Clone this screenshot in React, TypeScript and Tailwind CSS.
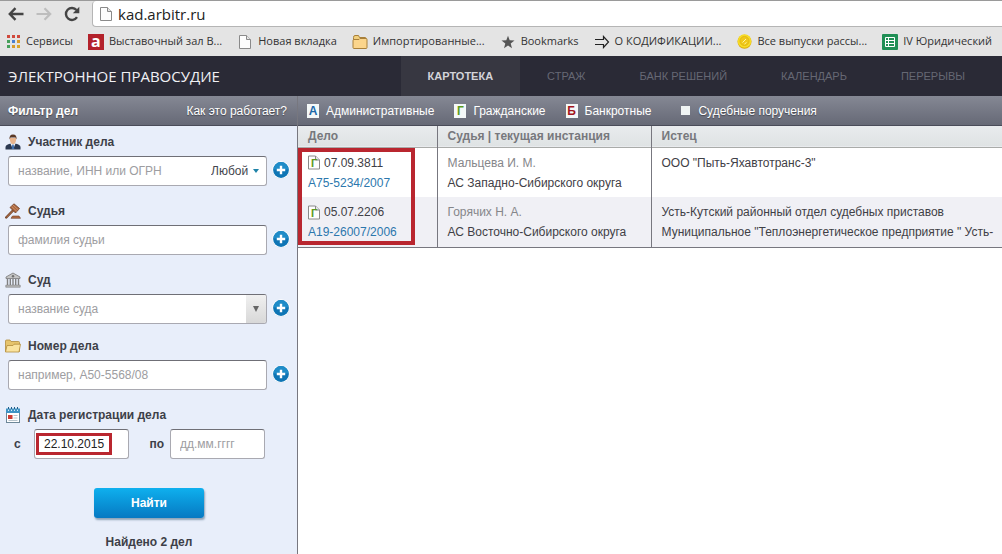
import type { ReactElement, ReactNode } from 'react';

const UI_FONT = "font-['Liberation_Sans',Arial,sans-serif]";
const CHROME_FONT = "font-['Open_Sans','Noto_Sans',sans-serif]";

/* ---------- icons ---------- */

function PageIcon({ className }: { className?: string }): ReactElement {
  return (
    <svg viewBox="0 0 12 14" className={className} fill="#fdfdfd" stroke="#8a8a8a">
      <path d="M.5.5h7l4 4v9H.5z" />
      <path d="M7.5.5v4h4" fill="#e6e6e6" />
    </svg>
  );
}

function AppsIcon(): ReactElement {
  const colors = ['#d0493c', '#d0493c', '#d0493c', '#46a05a', '#4a7fd0', '#d99a2b', '#46a05a', '#d99a2b', '#d9a52b'];
  return (
    <svg viewBox="0 0 13 13" className="size-[13px]">
      {colors.map((c, i) => (
        <rect key={i} x={(i % 3) * 5} y={Math.floor(i / 3) * 5} width="3" height="3" fill={c} />
      ))}
    </svg>
  );
}

function FolderIcon(): ReactElement {
  return (
    <svg viewBox="0 0 16 14" className="h-[14px] w-4" stroke="#a9803a">
      <path d="M1.5 12V2.500Q1.500.5 3 .5h3.500l1 2H13q1 0 1 1V12z" fill="#f1cf7c" />
      <path d="M1 12.500q0 1 1 1h12q1 0 1-1v-8q0-1-1-1H8l-1 1H2q-1 0-1 1z" fill="#fbd58c" />
    </svg>
  );
}

function StarIcon(): ReactElement {
  return (
    <svg viewBox="0 0 14 14" className="size-[14px]" fill="#555">
      <path d="M7 .8l1.700 4.500 4.800.2-3.800 3 1.300 4.700L7 10.500 3 13.200l1.300-4.700-3.800-3 4.800-.2z" />
    </svg>
  );
}

function DoubleArrowIcon(): ReactElement {
  return (
    <svg viewBox="0 0 16 14" className="h-[14px] w-4" fill="none" stroke="#222" strokeWidth="1.200">
      <path d="M1 4.500h8.500V1.500L14.500 7l-5 5.500v-3H1" />
    </svg>
  );
}

function CoinIcon(): ReactElement {
  return (
    <svg viewBox="0 0 15 15" className="size-[15px]">
      <circle cx="7.500" cy="7.800" r="7" fill="#d9a80c" />
      <circle cx="7.500" cy="7" r="6.800" fill="#f7dc25" />
      <circle cx="7.500" cy="7" r="4.500" fill="#f0c81a" stroke="#e3b814" />
      <path d="M5.500 8.500L9 5M9.500 8.500L7.500 10" stroke="#fff6a8" />
    </svg>
  );
}

function SheetIcon(): ReactElement {
  return (
    <svg viewBox="0 0 16 16" className="size-4">
      <rect width="16" height="16" rx="1" fill="#1f8f55" />
      <path d="M3.500 3.500h9v9h-9zM3.500 6.500h9M3.500 9.500h9M6.500 3.500v9" fill="none" stroke="#fff" />
    </svg>
  );
}

function PersonIcon(): ReactElement {
  return (
    <svg viewBox="0 0 16 16" className="size-4">
      <path d="M.5 15.500v-2.500Q1 10.500 5 9.800h6q4 .7 4.500 3.200v2.500z" fill="#2b3850" />
      <path d="M5.500 9.500L8 15.500l2.500-6z" fill="#f4f6fa" />
      <path d="M7.300 10.500h1.400l.6 4.500H6.700z" fill="#3f6fb0" />
      <path d="M4.800 4Q5 10.200 8 10.200T11.200 4z" fill="#e9b58d" />
      <path d="M4.500 5.500Q4 .5 8 .5t3.500 5L10.500 3.500h-5z" fill="#5a3826" />
    </svg>
  );
}

function GavelIcon(): ReactElement {
  return (
    <svg viewBox="0 0 16 16" className="size-4">
      <path d="M1.200 14.500L8 7.500" stroke="#6e3d23" strokeWidth="2.400" strokeLinecap="round" />
      <path d="M1.500 14.200L8 7.500" stroke="#c08055" strokeLinecap="round" />
      <path d="M5 4.500L9 .8l5.500 4.700-4 4.500z" fill="#a8653f" stroke="#6e3d23" strokeWidth=".8" />
      <path d="M6.500 3.300l5.500 5.200M8 2l5.500 5" stroke="#d99c70" strokeWidth=".8" />
      <path d="M7.500 13h6.500l1.500 2.300H6z" fill="#b06a42" stroke="#6e3d23" strokeWidth=".6" />
    </svg>
  );
}

function CourtIcon(): ReactElement {
  return (
    <svg viewBox="0 0 16 16" className="size-4">
      <path d="M8 1l7 4v1.500H1V5z" fill="#c4c4c4" stroke="#777" strokeWidth=".8" />
      <circle cx="8" cy="4.200" r="1.200" fill="#707070" />
      <path d="M2.500 7v6M5.300 7v6M8 7v6M10.700 7v6M13.500 7v6" stroke="#808080" strokeWidth="1.400" />
      <path d="M.8 13.200h14.400v2H.8z" fill="#b9b9b9" stroke="#777" strokeWidth=".6" />
    </svg>
  );
}

function OpenFolderIcon(): ReactElement {
  return (
    <svg viewBox="0 0 16 14" className="h-[14px] w-4" stroke="#b38d3c" strokeWidth=".8">
      <path d="M.5 12.500V2q0-1 1-1h3.500l1 1.500h7.500q1 0 1 1v9z" fill="#e6c46c" />
      <path d="M.5 13l1.500-6.500h6l1-1.300h6.500L14 13z" fill="#fae39e" />
    </svg>
  );
}

function CalendarIcon(): ReactElement {
  return (
    <svg viewBox="0 0 16 16" className="size-4">
      <rect x="1.500" y="2.500" width="13" height="13" fill="#fff" stroke="#6d8798" />
      <path d="M1 1.500h14v4.500H1z" fill="#3e93c4" />
      <path d="M3.500 0v2.500M6.500 0v2.500M9.500 0v2.500M12.500 0v2.500" stroke="#1d5f8a" />
      <path d="M3.500 2.500v1.500M6.500 2.500v1.500M9.500 2.500v1.500M12.500 2.500v1.500" stroke="#d6edf9" />
      <path d="M8.500 8.500h4M8.500 11h4M3.500 13.500h9" stroke="#b7c4cc" />
      <rect x="3" y="8" width="4.500" height="4" fill="#cc3a32" />
    </svg>
  );
}

function PlusIcon(): ReactElement {
  return (
    <svg viewBox="0 0 18 18" className="size-[18px]">
      <circle cx="9" cy="9.500" r="8.500" fill="#b4c8da" />
      <circle cx="9" cy="9" r="8.800" fill="#fff" />
      <circle cx="9" cy="9" r="7.900" fill="#0e75b5" />
      <path d="M1.600 8.500a7.400 7.400 0 0 1 14.800 0z" fill="#1f8cc8" />
      <path d="M9 4.800v8.400M4.800 9h8.400" stroke="#fff" strokeWidth="2.400" />
    </svg>
  );
}

function LetterPage({ letter, className }: { letter: string; className: string }): ReactElement {
  return (
    <span className={`flex h-[14px] w-3 items-center justify-center bg-[#f4f8f8] text-xs font-bold ${className}`}>
      {letter}
    </span>
  );
}

/* ---------- browser ---------- */

const bookmarks: { label: string; icon: ReactNode }[] = [
  { label: 'Сервисы', icon: <AppsIcon /> },
  {
    label: 'Выставочный зал В...',
    icon: (
      <span className="flex size-4 items-center justify-center bg-[#b3222b] pb-[2px] text-base leading-none font-bold text-white">
        a
      </span>
    ),
  },
  { label: 'Новая вкладка', icon: <PageIcon className="h-[14px] w-3" /> },
  { label: 'Импортированные...', icon: <FolderIcon /> },
  { label: 'Bookmarks', icon: <StarIcon /> },
  { label: 'О КОДИФИКАЦИИ...', icon: <DoubleArrowIcon /> },
  { label: 'Все выпуски рассы...', icon: <CoinIcon /> },
  { label: 'IV Юридический', icon: <SheetIcon /> },
];

function BrowserBar(): ReactElement {
  return (
    <div className={`${CHROME_FONT} border-t border-[#9a9a9a] bg-[#e4e4e4] text-[#333]`}>
      <div className="flex h-[26px] items-center">
        <div className="flex w-[92px] shrink-0 items-center gap-3 pl-2">
          <button type="button" aria-label="Назад">
            <svg viewBox="0 0 16 14" className="h-[14px] w-4" fill="none" stroke="#444" strokeWidth="2.400">
              <path d="M15.500 7H2M7.500 1.200L1.800 7l5.700 5.800" />
            </svg>
          </button>
          <button type="button" aria-label="Вперёд">
            <svg viewBox="0 0 16 14" className="h-[14px] w-4" fill="none" stroke="#bdbdbd" strokeWidth="2.200">
              <path d="M.5 7H14M8.500 1.200L14.200 7l-5.700 5.800" />
            </svg>
          </button>
          <button type="button" aria-label="Обновить">
            <svg viewBox="0 0 16 16" className="size-4" fill="none" stroke="#444" strokeWidth="2.400">
              <path d="M13 11.200A6 6 0 1 1 12.500 4" />
              <path d="M15.300.8v6.500H8.800z" fill="#444" stroke="none" />
            </svg>
          </button>
        </div>
        <div className="flex h-full min-w-0 flex-1 items-center gap-[6px] rounded-l-sm border-b border-l border-[#b5b5b5] bg-white pl-[7px]">
          <PageIcon className="h-[14px] w-3" />
          <input
            aria-label="Адрес"
            defaultValue="kad.arbitr.ru"
            className="min-w-0 flex-1 text-[15px] leading-6 text-[#222] outline-none"
          />
        </div>
      </div>
      <nav className="flex h-[29px] items-center gap-[15px] overflow-hidden pl-[5px] text-[11px] whitespace-nowrap">
        {bookmarks.map((b) => (
          <a key={b.label} href="#" className="flex shrink-0 items-center gap-[5px]">
            <span className="flex w-4 justify-center">{b.icon}</span>
            {b.label}
          </a>
        ))}
      </nav>
    </div>
  );
}

/* ---------- site header ---------- */

function SiteHeader(): ReactElement {
  const tabs = ['СТРАЖ', 'БАНК РЕШЕНИЙ', 'КАЛЕНДАРЬ', 'ПЕРЕРЫВЫ'];
  return (
    <header className="flex h-10 items-center justify-between bg-[#2a2a36] pr-[10px] pl-2">
      <h1 className={`${CHROME_FONT} text-[15px] text-[#f0f0f4]`}>ЭЛЕКТРОННОЕ ПРАВОСУДИЕ</h1>
      <nav className="flex h-full text-[11px] text-[#666874]">
        <a href="#" className="flex items-center bg-[#373741] px-[27px] font-bold text-[#d3d3d9]">
          КАРТОТЕКА
        </a>
        {tabs.map((tab) => (
          <a key={tab} href="#" className="flex items-center px-[27px]">
            {tab}
          </a>
        ))}
      </nav>
    </header>
  );
}

/* ---------- filter ---------- */

const FIELD =
  'flex h-[30px] w-full min-w-0 overflow-hidden rounded-[3px] border border-[#a9a9b1] border-t-[#6f6f76] bg-white';
const INPUT = 'min-w-0 flex-1 px-[9px] text-xs text-[#222] outline-none placeholder:text-[#9d9da1]';

interface FilterFieldProps {
  id: string;
  label: string;
  icon: ReactNode;
  placeholder: string;
  className?: string;
  children?: ReactNode;
}

function FieldLabel({ id, label, icon }: { id: string; label: string; icon: ReactNode }): ReactElement {
  return (
    <label htmlFor={id} className="mb-[2px] -ml-[3px] flex h-6 items-center gap-[7px] font-bold">
      {icon}
      {label}
    </label>
  );
}

function FilterField({ id, label, icon, placeholder, className = 'mb-[13px]', children }: FilterFieldProps): ReactElement {
  return (
    <div className={className}>
      <FieldLabel id={id} label={label} icon={icon} />
      <div className="flex items-center gap-[5px]">
        <div className={FIELD}>
          <input id={id} placeholder={placeholder} className={INPUT} />
          {children}
        </div>
        <button type="button" aria-label={`Добавить: ${label}`} className="shrink-0 pb-[2px]">
          <PlusIcon />
        </button>
      </div>
    </div>
  );
}

function FilterPanel(): ReactElement {
  return (
    <aside className="w-[298px] shrink-0 border-r border-[#77777f] bg-[#e8eefa] text-xs text-[#3d3f48]">
      <div className="flex h-[30px] items-center justify-between border-b border-[#4a4c59] bg-linear-to-b from-[#858894] to-[#666976] pr-[10px] pl-2 text-white [text-shadow:0_1px_1px_#44464f]">
        <h2 className="font-bold">Фильтр дел</h2>
        <a href="#">Как это работает?</a>
      </div>
      <form className="pt-1 pr-[7px] pl-2" onSubmit={(e) => e.preventDefault()}>
        <FilterField id="party" label="Участник дела" icon={<PersonIcon />} placeholder="название, ИНН или ОГРН">
          <div className="flex items-center gap-1 pr-[7px]">
            <select aria-label="Роль участника" className="appearance-none text-[#44464e] outline-none">
              <option>Любой</option>
            </select>
            <svg viewBox="0 0 6 4" className="h-1 w-[6px]" fill="#1f83a8">
              <path d="M0 0h6L3 4z" />
            </svg>
          </div>
        </FilterField>
        <FilterField id="judge" label="Судья" icon={<GavelIcon />} placeholder="фамилия судьи" />
        <FilterField id="court" label="Суд" icon={<CourtIcon />} placeholder="название суда" className="mb-[10px]">
          <button
            type="button"
            aria-label="Список судов"
            className="flex w-5 items-center justify-center bg-linear-to-b from-[#f0f0f0] to-[#d8d8d8]"
          >
            <svg viewBox="0 0 6 6" className="size-[6px]" fill="#666">
              <path d="M0 0h6L3 6z" />
            </svg>
          </button>
        </FilterField>
        <FilterField id="number" label="Номер дела" icon={<OpenFolderIcon />} placeholder="например, А50-5568/08" />

        <FieldLabel id="from" label="Дата регистрации дела" icon={<CalendarIcon />} />
        <div className="flex items-center pr-[25px] pl-[6px]">
          <label htmlFor="from" className="w-5 shrink-0 font-bold">
            с
          </label>
          <div className="relative min-w-0 flex-1">
            <div className={FIELD}>
              <input id="from" defaultValue="22.10.2015" className={INPUT} />
            </div>
            <span className="pointer-events-none absolute top-1 left-[2px] h-[22px] w-[76px] border-3 border-[#b9262f]" />
          </div>
          <label htmlFor="to" className="w-[41px] shrink-0 pr-[6px] text-right font-bold">
            по
          </label>
          <div className="min-w-0 flex-1">
            <div className={FIELD}>
              <input id="to" placeholder="дд.мм.гггг" className={INPUT} />
            </div>
          </div>
        </div>

        <button
          type="submit"
          className="mx-auto mt-[29px] block h-[30px] w-[110px] rounded-[3px] bg-linear-to-b from-[#0fb0ee] to-[#0879c2] font-bold text-white shadow-[1px_2px_2px_#8fa3b8]"
        >
          Найти
        </button>
        <p className="mt-4 text-center leading-4 font-bold">Найдено 2 дел</p>
      </form>
    </aside>
  );
}

/* ---------- results ---------- */

interface CaseRow {
  date: string;
  number: string;
  judge: string;
  court: string;
  plaintiffs: string[];
}

const cases: CaseRow[] = [
  {
    date: '07.09.3811',
    number: 'А75-5234/2007',
    judge: 'Мальцева И. М.',
    court: 'АС Западно-Сибирского округа',
    plaintiffs: ['ООО "Пыть-Яхавтотранс-3"'],
  },
  {
    date: '05.07.2206',
    number: 'А19-26007/2006',
    judge: 'Горячих Н. А.',
    court: 'АС Восточно-Сибирского округа',
    plaintiffs: [
      'Усть-Кутский районный отдел судебных приставов',
      'Муниципальное "Теплоэнергетическое предприятие " Усть-',
    ],
  },
];

function CaseTypes(): ReactElement {
  return (
    <div className="flex h-[30px] items-center gap-5 border-b border-[#4a4c59] bg-linear-to-b from-[#858894] to-[#666976] pl-[9px] text-xs whitespace-nowrap text-white [text-shadow:0_1px_1px_#44464f]">
      <button type="button" className="flex items-center gap-[7px]">
        <LetterPage letter="А" className="text-[#1c69a8] [text-shadow:none]" />
        Административные
      </button>
      <button type="button" className="flex items-center gap-[7px]">
        <LetterPage letter="Г" className="text-[#5c9a1c] [text-shadow:none]" />
        Гражданские
      </button>
      <button type="button" className="flex items-center gap-[7px]">
        <LetterPage letter="Б" className="text-[#a3161d] [text-shadow:none]" />
        Банкротные
      </button>
      <label className="ml-[10px] flex items-center gap-2">
        <input type="checkbox" className="size-[9px] appearance-none bg-[#f0f4f4]" />
        Судебные поручения
      </label>
    </div>
  );
}

function Results(): ReactElement {
  return (
    <main className="min-w-0 flex-1 bg-white">
      <CaseTypes />
      <table className="w-full table-fixed border-b border-[#77777f] text-left text-xs text-[#3f4046]">
        <thead>
          <tr className="h-[21px] border-b border-[#a9aba9] bg-linear-to-b from-[#e9ebee] to-[#dfe3e4] text-[#77787d]">
            <th className="w-[139px] border-r border-[#77777f] pl-[10px]">Дело</th>
            <th className="w-[214px] border-r border-[#77777f] pl-[10px]">Судья | текущая инстанция</th>
            <th className="pl-[10px]">Истец</th>
          </tr>
        </thead>
        <tbody>
          {cases.map((c, i) => (
            <tr key={c.number} className="h-[50px] align-top leading-5 even:bg-[#f0f0f5]">
              <td className="relative border-r border-[#77777f] pt-[5px] pl-[10px]">
                <div className="flex items-center gap-1">
                  <span className="relative flex">
                    <PageIcon className="h-[15px] w-3" />
                    <span className="absolute inset-0 text-center text-[11px] leading-4 font-bold text-[#5c9a1c]">
                      Г
                    </span>
                  </span>
                  {c.date}
                </div>
                <a href="#" className="text-[#2c77ad]">
                  {c.number}
                </a>
                {i === 0 && (
                  <span className="pointer-events-none absolute top-0 left-0 z-10 h-[97px] w-[117px] border-4 border-[#b9262f]" />
                )}
              </td>
              <td className="border-r border-[#77777f] pt-[5px] pl-[10px]">
                <div className="text-[#85868a]">{c.judge}</div>
                <div>{c.court}</div>
              </td>
              <td className="pt-[5px] pl-[10px]">
                {c.plaintiffs.map((p) => (
                  <div key={p} className="whitespace-nowrap">
                    {p}
                  </div>
                ))}
              </td>
            </tr>
          ))}
        </tbody>
      </table>
    </main>
  );
}

export default function App(): ReactElement {
  return (
    <div className={`${UI_FONT} flex min-h-screen flex-col overflow-hidden bg-white`}>
      <BrowserBar />
      <SiteHeader />
      <div className="flex flex-1">
        <FilterPanel />
        <Results />
      </div>
    </div>
  );
}
